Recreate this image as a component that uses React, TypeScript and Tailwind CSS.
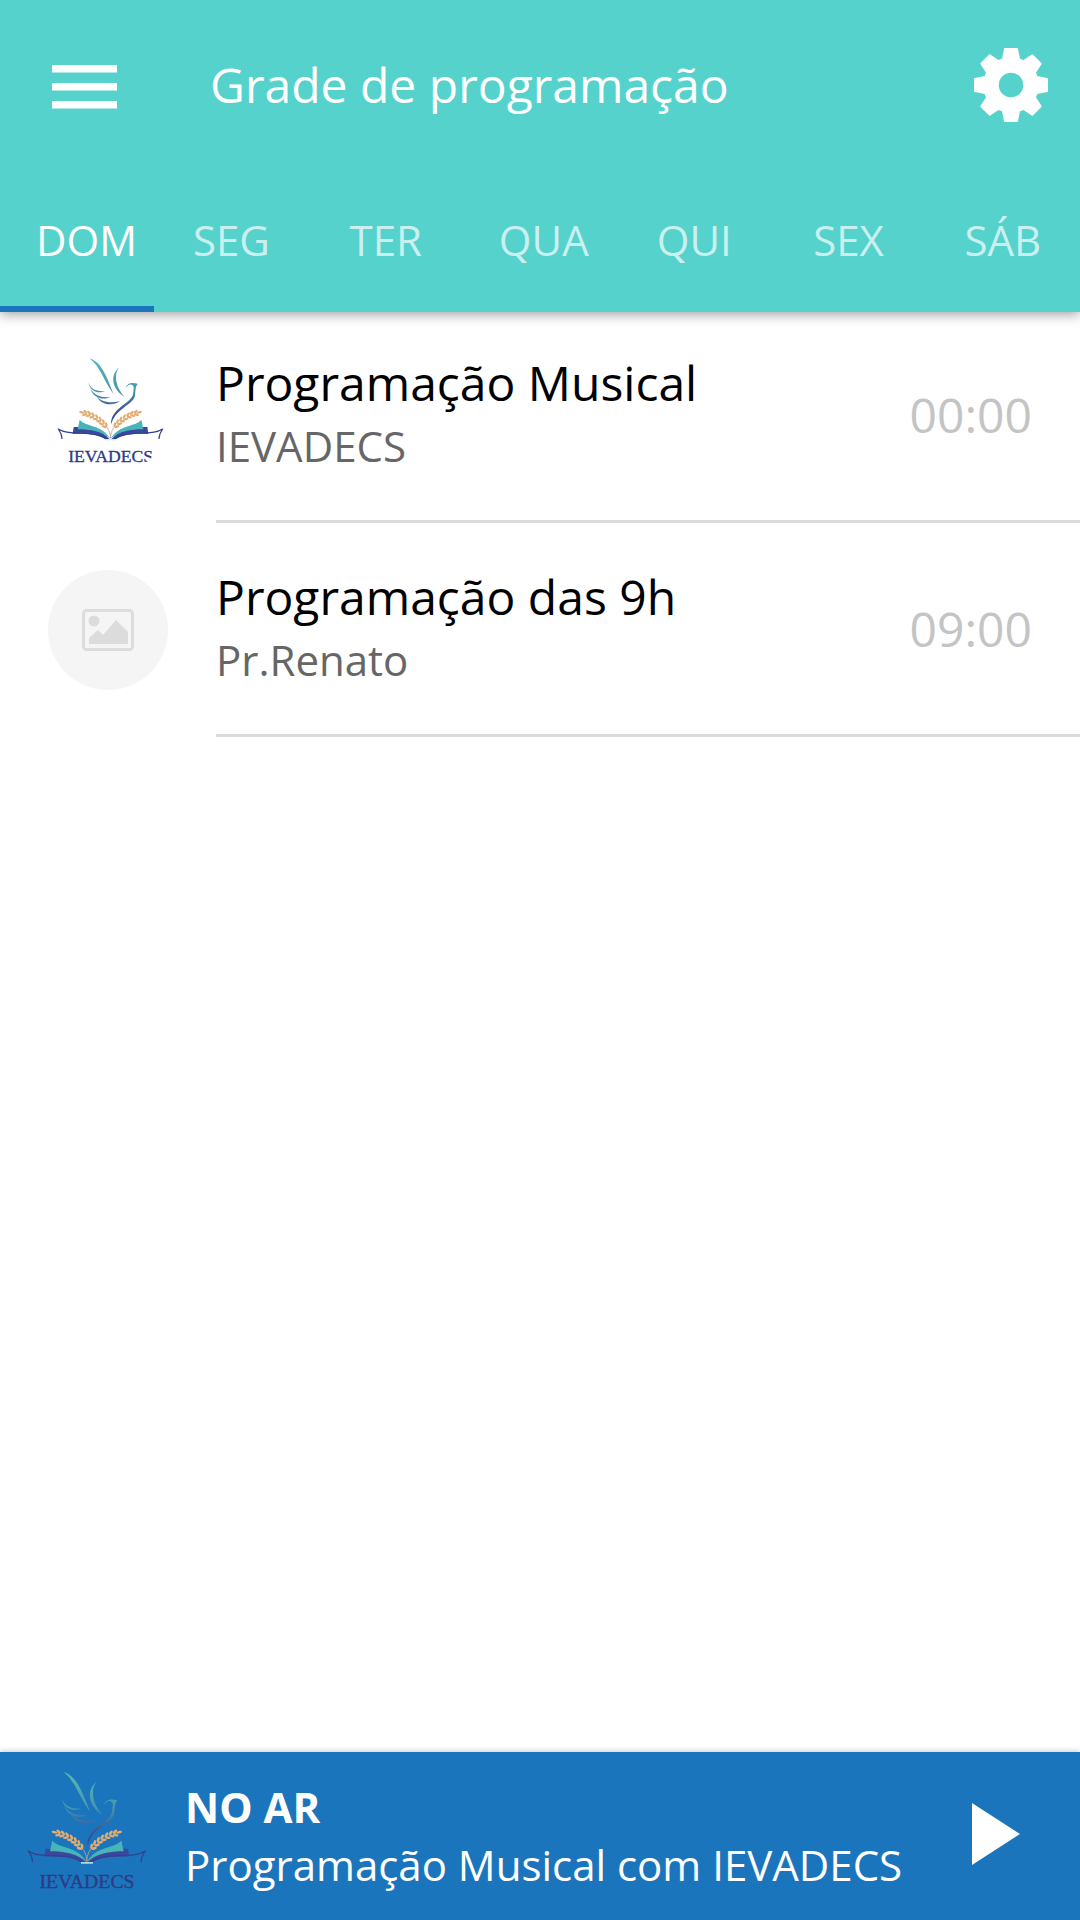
const days = ['DOM', 'SEG', 'TER', 'QUA', 'QUI', 'SEX', 'SÁB'];

const programs = [
  { title: 'Programação Musical', host: 'IEVADECS', time: '00:00', logo: true },
  { title: 'Programação das 9h', host: 'Pr.Renato', time: '09:00', logo: false },
];

const grains = [
  { x: 136, y: 220, a: 14 },
  { x: 147, y: 223, a: 19 },
  { x: 158, y: 228, a: 25 },
  { x: 169, y: 234, a: 31 },
  { x: 179, y: 241, a: 38 },
  { x: 188, y: 249, a: 45 },
  { x: 196, y: 258, a: 50 },
];

function MenuIcon() {
  return (
    <svg viewBox="0 0 66 48" className="h-12 w-[66px]" fill="currentColor" aria-hidden="true">
      <path d="M0 4h65v7.5H0zM0 22h65v7.5H0zM0 40h65v7.5H0z" />
    </svg>
  );
}

function GearIcon() {
  return (
    <svg viewBox="-37 -37 74 74" className="size-[74px]" fill="currentColor" aria-hidden="true">
      {[0, 45, 90, 135, 180, 225, 270, 315].map((a) => (
        <path
          key={a}
          d="M-6 -36H6L8 -26L11 -24H-11L-8 -26Z"
          stroke="currentColor"
          strokeWidth="2"
          strokeLinejoin="round"
          transform={`rotate(${a})`}
        />
      ))}
      <circle r="19.5" fill="none" stroke="currentColor" strokeWidth="14.5" />
    </svg>
  );
}

function Wheat() {
  return (
    <g>
      <path d="M212 294C210 276 205 266 197 258" fill="none" stroke="#c99a72" strokeWidth="2.5" />
      {grains.map((g) => (
        <g key={g.x} fill="#e3ab70" transform={`translate(${g.x} ${g.y}) rotate(${g.a})`}>
          <ellipse cx="-1" cy="-4.5" rx="7.5" ry="3.6" transform="rotate(30 -1 -4.5)" />
          <ellipse cx="-1" cy="4.5" rx="7.5" ry="3.6" transform="rotate(-30 -1 4.5)" />
        </g>
      ))}
      <ellipse cx="125" cy="217" rx="8" ry="3.6" fill="#e3ab70" transform="rotate(10 125 217)" />
    </g>
  );
}

function BookSide() {
  return (
    <g>
      <path d="M98 282L101 261C138 260 184 266 210 299H198C170 282 138 280 98 282Z" fill="#3b479d" />
      <path d="M113 268L119 239C138 262 186 252 212 298C188 274 150 268 113 268Z" fill="#46b4b8" />
      <path
        d="M66 297C66 284 60 274 55 267C92 292 162 266 205 299"
        fill="none"
        stroke="#34418f"
        strokeWidth="3.5"
        strokeLinejoin="round"
      />
    </g>
  );
}

function StationLogo({ viewBox, id, className }: { viewBox: string; id: string; className: string }) {
  return (
    <svg viewBox={viewBox} className={className} role="img" aria-label="IEVADECS">
      <defs>
        <linearGradient id={id} gradientUnits="userSpaceOnUse" x1="0" y1="55" x2="0" y2="252">
          <stop offset="0" stopColor="#55b9bb" />
          <stop offset="0.5" stopColor="#4795ae" />
          <stop offset="0.75" stopColor="#3d5f9c" />
          <stop offset="1" stopColor="#34418f" />
        </linearGradient>
      </defs>
      <g fill={`url(#${id})`}>
        <path d="M148 55C186 66 200 112 221 163C190 122 182 80 148 55Z" />
        <path d="M237 82C221 103 226 142 254 171C220 150 206 110 237 82Z" />
        <path d="M145 126C150 147 172 156 196 153C178 163 148 155 145 126Z" />
        <path d="M151 144C162 167 184 174 211 171C190 182 158 174 151 144Z" />
        <path d="M170 170C188 188 216 190 240 183C218 200 184 195 170 170Z" />
        <path d="M257 144C263 126 281 128 294 132C286 137 287 151 285 167C280 194 222 208 214 254C208 208 274 190 279 163C281 145 284 138 275 134C268 132 262 137 257 144Z" />
      </g>
      <BookSide />
      <g transform="translate(423 0) scale(-1 1)">
        <BookSide />
      </g>
      <Wheat />
      <g transform="translate(423 0) scale(-1 1)">
        <Wheat />
      </g>
      <path d="M196 299H228" stroke="#c4edf3" strokeWidth="4" />
      <text
        x="212"
        y="365"
        textAnchor="middle"
        fontSize="53"
        fontFamily="Liberation Serif, serif"
        fill="#2f3a86"
        stroke="#2f3a86"
        strokeWidth="1"
      >
        IEVADECS
      </text>
    </svg>
  );
}

function Placeholder() {
  return (
    <div className="flex size-[120px] shrink-0 items-center justify-center rounded-full bg-[#f5f5f5]">
      <svg viewBox="0 0 52 42" className="h-[42px] w-[52px]" aria-hidden="true">
        <rect x="1.5" y="1.5" width="49" height="39" rx="3" fill="none" stroke="#dcdcdc" strokeWidth="3" />
        <circle cx="12" cy="12" r="5.5" fill="#dcdcdc" />
        <path d="M7 35V29L16 21L21 26L34 11L46 23V35Z" fill="#dcdcdc" />
      </svg>
    </div>
  );
}

export default function App() {
  return (
    <div className="flex min-h-screen flex-col bg-white font-['Open_Sans',sans-serif] text-black">
      <header className="relative z-10 bg-[#55d2cc] text-white shadow-[0_2px_12px_rgba(0,0,0,0.4)]">
        <div className="flex h-[170px] items-center pr-8 pl-[52px]">
          <button aria-label="Menu" className="shrink-0">
            <MenuIcon />
          </button>
          <h1 className="ml-[92px] flex-1 text-[48px] leading-[64px]">Grade de programação</h1>
          <button aria-label="Configurações" className="shrink-0">
            <GearIcon />
          </button>
        </div>
        <nav role="tablist" aria-label="Dias da semana" className="flex h-[142px]">
          {days.map((day, i) => (
            <button
              key={day}
              role="tab"
              aria-selected={i === 0}
              className={
                i === 0
                  ? 'min-w-0 flex-1 border-b-[6px] border-[#1b75bc] px-9 pt-0.5 text-[42px]'
                  : 'min-w-0 flex-1 border-b-[6px] border-transparent px-9 pt-0.5 text-[42px] text-white/70'
              }
            >
              {day}
            </button>
          ))}
        </nav>
      </header>

      <main className="-mt-[3px] flex-1">
        <ul>
          {programs.map((p, i) => (
            <li key={p.title} className="flex h-[214px] pl-12">
              <div className="pt-[47px]">
                {p.logo ? (
                  <StationLogo
                    id={`row-${i}`}
                    viewBox="24 48 360 360"
                    className="size-[120px] shrink-0 rounded-full"
                  />
                ) : (
                  <Placeholder />
                )}
              </div>
              <div className="ml-12 flex flex-1 items-center justify-between border-b-[3px] border-[#dcdcdc] pr-12">
                <div className="pb-0.5">
                  <h2 className="text-[48px] leading-[64px]">{p.title}</h2>
                  <p className="text-[42px] leading-[62px] text-[#666666]">{p.host}</p>
                </div>
                <time className="text-[48px] leading-[64px] text-[#c4c4c4]">{p.time}</time>
              </div>
            </li>
          ))}
        </ul>
      </main>

      <footer className="flex h-[168px] items-center bg-[#1b75bc] pr-[60px] text-white shadow-[0_-1px_5px_rgba(0,0,0,0.2)]">
        <StationLogo id="player" viewBox="-21 2 450 450" className="size-[168px] shrink-0" />
        <div className="ml-[17px] min-w-0 flex-1 text-[42px] leading-[58px]">
          <p className="font-bold">NO AR</p>
          <p className="truncate">Programação Musical com IEVADECS</p>
        </div>
        <button aria-label="Reproduzir" className="shrink-0 pb-1">
          <svg viewBox="0 0 48 62" className="h-[62px] w-12" fill="currentColor" aria-hidden="true">
            <path d="M0 0L48 31L0 62Z" />
          </svg>
        </button>
      </footer>
    </div>
  );
}
